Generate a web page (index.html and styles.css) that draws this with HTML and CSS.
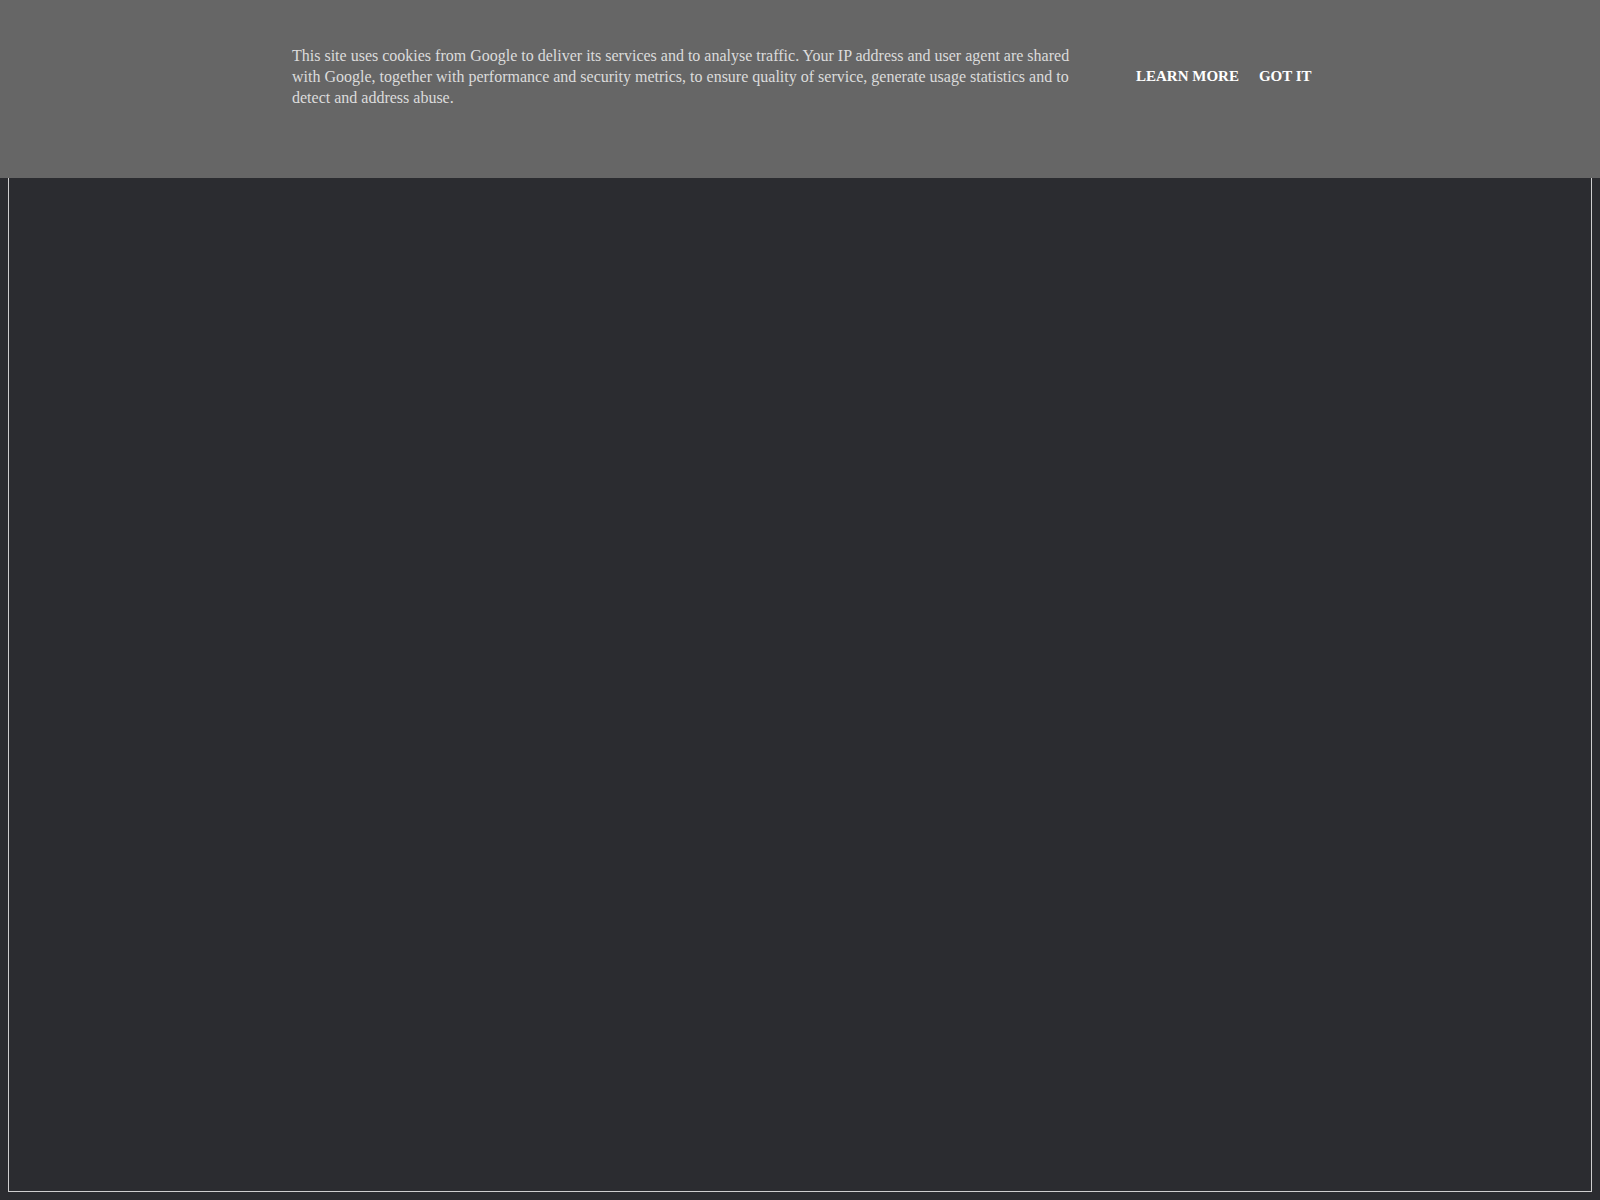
FILE: index.html
```html
<!DOCTYPE html>
<html lang="en">
<head>
<meta charset="utf-8">
<title>Blog</title>
<link rel="stylesheet" href="styles.css">
</head>
<body>
<div class="page"></div>
<div class="cookie-bar">
  <div class="cookie-inner">
    <span class="cookie-text">This site uses cookies from Google to deliver its services and to analyse traffic. Your IP address and user agent are shared with Google, together with performance and security metrics, to ensure quality of service, generate usage statistics and to detect and address abuse.</span>
    <span class="cookie-buttons">
      <a class="cookie-button" href="#">Learn more</a>
      <a class="cookie-button" href="#">Got it</a>
    </span>
  </div>
</div>
</body>
</html>
```
FILE: styles.css
```css
html, body {
  height: 100%;
}
body {
  margin: 8px;
  background: #2b2c30;
  font-family: "Liberation Serif", "Times New Roman", serif;
}
.page {
  box-sizing: border-box;
  height: calc(100vh - 16px);
  border: 1px solid #cfcfcf;
}
.cookie-bar {
  position: fixed;
  top: 0;
  left: 0;
  right: 0;
  height: 178px;
  background: #666666;
  color: #dcdcdc;
}
.cookie-inner {
  width: 1016px;
  margin: 0 auto;
  padding-top: 45px;
  display: flex;
  align-items: center;
}
.cookie-text {
  flex: 0 0 790px;
  font-size: 16px;
  line-height: 21px;
}
.cookie-buttons {
  display: flex;
  flex: 0 0 auto;
  gap: 20px;
  margin-left: 54px;
  white-space: nowrap;
}
.cookie-button {
  color: #ffffff;
  font-weight: bold;
  font-size: 15px;
  text-transform: uppercase;
  text-decoration: none;
}
```
